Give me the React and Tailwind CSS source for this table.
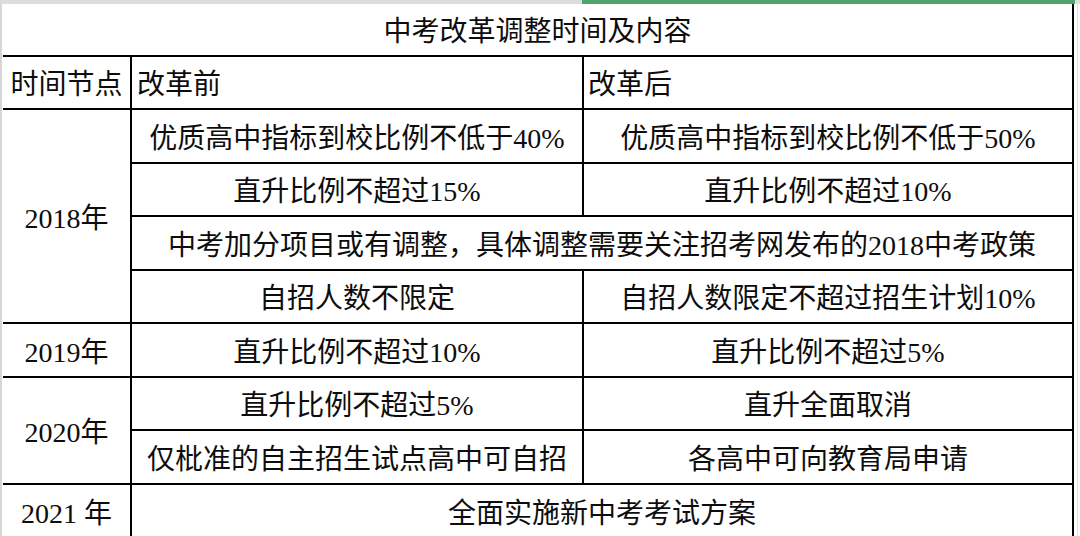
import React from "react";

const font = {
  fontFamily: '"Liberation Serif", "Noto Sans CJK SC", serif',
};

function Cell({ children, className = "" }) {
  return (
    <div
      className={
        "bg-white flex items-center justify-center pt-[5px] text-[28px] leading-none text-[#0d0d0d] whitespace-nowrap overflow-hidden " +
        className
      }
    >
      {children}
    </div>
  );
}

export default function App() {
  return (
    <div
      className="w-[1080px] h-[536px] overflow-hidden bg-white flex flex-col"
      style={font}
    >
      {/* spreadsheet chrome on top */}
      <div className="flex h-[4px] shrink-0">
        <div className="w-[582px] bg-[#dcdcdc]" />
        <div className="w-[493px] bg-[#4ea46c]" />
        <div className="flex-1 bg-[#dcdcdc]" />
      </div>

      <div className="flex flex-1 min-h-0">
        <div className="w-[3px] shrink-0 bg-white border-l-2 border-[#d6d6d6]" />

        <div className="grid grid-cols-[127px_450px_488px] grid-rows-[51px_51px_52px_51px_52px_51px_52px_51px_52px_52px] gap-[2px] bg-black pr-[2px] shrink-0">
          <Cell className="col-span-3">中考改革调整时间及内容</Cell>

          <Cell>时间节点</Cell>
          <Cell className="justify-start pl-[5px]">改革前</Cell>
          <Cell className="justify-start pl-[4px]">改革后</Cell>

          <Cell className="row-span-4">2018年</Cell>
          <Cell>优质高中指标到校比例不低于40%</Cell>
          <Cell>优质高中指标到校比例不低于50%</Cell>
          <Cell>直升比例不超过15%</Cell>
          <Cell>直升比例不超过10%</Cell>
          <Cell className="col-span-2">
            中考加分项目或有调整，具体调整需要关注招考网发布的2018中考政策
          </Cell>
          <Cell>自招人数不限定</Cell>
          <Cell>自招人数限定不超过招生计划10%</Cell>

          <Cell>2019年</Cell>
          <Cell>直升比例不超过10%</Cell>
          <Cell>直升比例不超过5%</Cell>

          <Cell className="row-span-2">2020年</Cell>
          <Cell>直升比例不超过5%</Cell>
          <Cell>直升全面取消</Cell>
          <Cell>仅枇准的自主招生试点高中可自招</Cell>
          <Cell>各高中可向教育局申请</Cell>

          <Cell>2021 年</Cell>
          <Cell className="col-span-2">全面实施新中考考试方案</Cell>
        </div>

        <div className="flex-1 flex justify-center">
          <div className="w-px bg-[#e2e2e2]" />
        </div>
      </div>
    </div>
  );
}
